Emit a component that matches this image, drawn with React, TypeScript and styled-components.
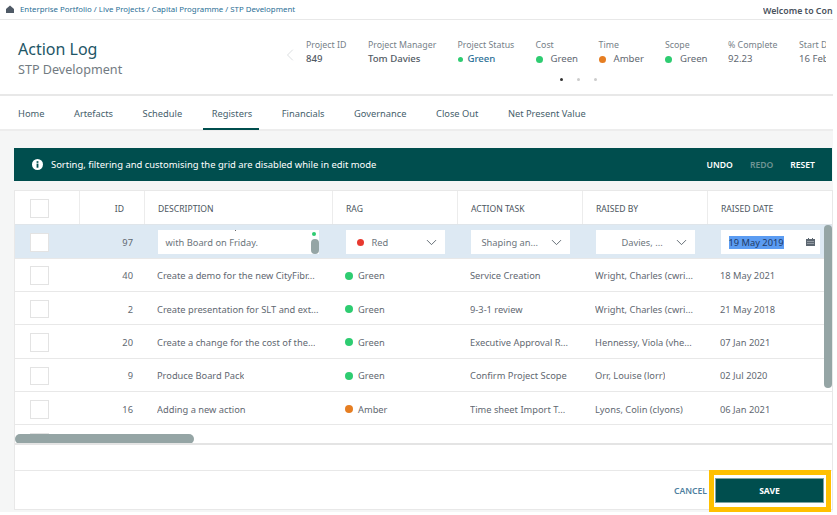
import React from "react";
import styled, { createGlobalStyle } from "styled-components";
import { ChevronDown, ChevronLeft } from "lucide-react";

const Global = createGlobalStyle`
  html, body { margin: 0; padding: 0; background: #fff; overflow: hidden; }
  body { font-family: "Noto Sans", "Open Sans", "Liberation Sans", sans-serif; }
  * { box-sizing: border-box; }
`;

const Page = styled.div`
  width: 833px;
  height: 512px;
  background: #f5f6f6;
  position: relative;
  overflow: hidden;
`;
const TopBar = styled.div`
  height: 20px;
  background: #fff;
  border-bottom: 1px solid #e8e8e8;
  display: flex;
  align-items: center;
  padding: 0 0 1px 6px;
  font-size: 7.85px;
  color: #2b6f96;
`;
const Crumbs = styled.span`
  margin-left: 6px;
  white-space: nowrap;
`;
const Welcome = styled.span`
  margin-left: auto;
  padding-top: 3px;
  width: 70px;
  overflow: hidden;
  font-size: 8.8px;
  font-weight: 600;
  color: #4a525c;
  white-space: nowrap;
`;
const Header = styled.div`
  height: 76px;
  background: #fff;
  border-bottom: 2px solid #e8e8e8;
  display: flex;
`;
const TitleBlock = styled.div`
  width: 283px;
  padding: 17px 0 0 18px;
`;
const Title = styled.div`
  font-size: 16px;
  line-height: 24px;
  color: #1e5666;
`;
const Subtitle = styled.div`
  font-size: 12.6px;
  line-height: 17px;
  color: #727b82;
`;
const MetaArea = styled.div`
  width: 543px;
  overflow: hidden;
  position: relative;
  padding-top: 18px;
`;
const MetaRow = styled.div`
  display: flex;
  align-items: flex-start;
`;
const Prev = styled.div`
  flex: 0 0 26px;
  color: #dcdfe1;
  padding-top: 7px;
  margin-left: -3px;
`;
const MetaItem = styled.div<{ $w: number }>`
  flex: 0 0 ${(p) => p.$w}px;
  white-space: nowrap;
`;
const MetaLabel = styled.div`
  font-size: 8.8px;
  line-height: 14px;
  color: #767f88;
`;
const MetaValue = styled.div<{ $strong?: boolean; $blue?: boolean }>`
  font-size: 9.6px;
  line-height: 14px;
  display: flex;
  align-items: center;
  font-weight: ${(p) => (p.$strong ? 500 : 400)};
  color: ${(p) => (p.$blue ? "#2b6f96" : p.$strong ? "#525a64" : "#5f6871")};
`;
const Dot = styled.span<{ $c: string; $s?: number; $g?: number }>`
  display: inline-block;
  flex: none;
  width: ${(p) => p.$s ?? 7}px;
  height: ${(p) => p.$s ?? 7}px;
  border-radius: 50%;
  background: ${(p) => p.$c};
  margin-right: ${(p) => p.$g ?? 5}px;
`;
const RagDot = styled(Dot)`
  margin-left: 3px;
`;
const Pager = styled.div`
  position: absolute;
  left: 277px;
  top: 58px;
  display: flex;
  gap: 14px;
`;
const PagerDot = styled.span<{ $on?: boolean }>`
  width: 3px;
  height: 3px;
  border-radius: 50%;
  background: ${(p) => (p.$on ? "#333" : "#ccc")};
`;
const Nav = styled.nav`
  height: 35px;
  background: #fff;
  border-bottom: 2px solid #ededed;
  display: flex;
  gap: 29.5px;
  padding: 0 0 0 18px;
`;
const NavItem = styled.div<{ $on?: boolean }>`
  position: relative;
  font-size: 9.3px;
  line-height: 35px;
  color: #45606b;
  white-space: nowrap;
  ${(p) =>
    p.$on &&
    `&::after { content: ""; position: absolute; left: -9px; right: -7px; top: 32px; height: 2px; background: #004e4e; }`}
`;
const Content = styled.div`
  padding: 17px 0 0 14px;
`;
const Banner = styled.div`
  width: 818px;
  height: 33px;
  background: #004e4e;
  color: #fff;
  display: flex;
  align-items: center;
  padding: 0 17px 0 18px;
  font-size: 9.44px;
`;
const BannerText = styled.span`
  margin-left: 8px;
`;
const BannerActions = styled.div`
  margin-left: auto;
  display: flex;
  gap: 17px;
  font-size: 8.6px;
  font-weight: 600;
`;
const BannerAction = styled.span<{ $off?: boolean }>`
  color: ${(p) => (p.$off ? "#6f9494" : "#fff")};
`;
const Panel = styled.div`
  margin-top: 9px;
  width: 819px;
  background: #fff;
  border: 1px solid #e8e8e8;
`;
const GridWrap = styled.div`
  position: relative;
  height: 254px;
  overflow: hidden;
  border-bottom: 2px solid #e4e4e4;
`;
const Row = styled.div<{ $kind?: "head" | "edit" }>`
  display: grid;
  grid-template-columns: 64px 65px 188px 125px 125px 125px 126px;
  height: ${(p) => (p.$kind === "head" ? "34px" : p.$kind === "edit" ? "33.5px" : "33.4px")};
  align-items: center;
  font-size: 9.3px;
  color: ${(p) => (p.$kind === "head" ? "#4c5660" : "#5f6871")};
  background: ${(p) => (p.$kind === "edit" ? "#dde9f3" : "#fff")};
  border-bottom: 1px solid ${(p) => (p.$kind === "head" ? "#dfe5ea" : "#e8e8e8")};
`;
const HeadCell = styled.div<{ $right?: boolean }>`
  height: 100%;
  display: flex;
  align-items: center;
  justify-content: ${(p) => (p.$right ? "flex-end" : "flex-start")};
  padding: ${(p) => (p.$right ? "2px 20px 0 0" : "2px 0 0 13px")};
  border-left: 1px solid #ececec;
  font-size: 8.6px;
  white-space: nowrap;
`;
const Cell = styled.div<{ $right?: boolean; $box?: boolean }>`
  display: flex;
  align-items: center;
  justify-content: ${(p) => (p.$right ? "flex-end" : "flex-start")};
  padding: ${(p) => (p.$box ? "1px 10px 0 13.5px" : p.$right ? "2px 11px 0 0" : "2px 10px 0 13px")};
  white-space: nowrap;
  overflow: hidden;
  min-width: 0;
`;
const CheckCell = styled.div`
  padding: 2px 0 0 15px;
  display: flex;
  align-items: center;
`;
const Check = styled.span`
  width: 18.5px;
  height: 18.5px;
  background: #fff;
  border: 1px solid #e3e3e3;
`;
const Clip = styled.span`
  overflow: hidden;
  text-overflow: ellipsis;
`;
const EditBox = styled.div<{ $w?: number }>`
  position: relative;
  width: ${(p) => p.$w ?? 99}px;
  height: 24px;
  background: #fff;
  display: flex;
  align-items: center;
  padding: 1px 8px 0;
  color: #6c747b;
  overflow: hidden;
`;
const Tick = styled.span`
  position: absolute;
  left: 77px;
  top: -1px;
  width: 1px;
  height: 2px;
  background: #666;
`;
const AreaDot = styled.span`
  position: absolute;
  right: 3px;
  top: 2px;
  width: 4px;
  height: 4px;
  border-radius: 50%;
  background: #2ecc71;
`;
const AreaThumb = styled.span`
  position: absolute;
  right: 0;
  top: 9px;
  width: 8px;
  height: 15px;
  border-radius: 4px;
  background: #95a5a5;
`;
const SelectText = styled.span<{ $pad?: number }>`
  padding-left: ${(p) => p.$pad ?? 0}px;
  flex: 1;
  min-width: 0;
  white-space: nowrap;
`;
const Caret = styled(ChevronDown)`
  flex: none;
  margin-right: -3px;
  color: #59636c;
`;
const Selected = styled.span`
  background: #5b9cf2;
  color: #1f3a66;
`;
const Calendar = styled.svg`
  position: absolute;
  right: 5px;
  top: 8px;
`;
const VScroll = styled.div`
  position: absolute;
  right: 0;
  top: 34px;
  width: 8px;
  height: 163px;
  border-radius: 4px;
  background: #95a5a5;
`;
const HScroll = styled.div`
  position: absolute;
  left: 0;
  top: 243px;
  width: 179px;
  height: 10px;
  border-radius: 5px;
  background: #95a5a5;
`;
const Spacer = styled.div`
  height: 26px;
  border-bottom: 1px solid #e8e8e8;
`;
const Footer = styled.div`
  position: relative;
  height: 38px;
  display: flex;
  justify-content: flex-end;
  align-items: center;
  padding: 1px 8px 0 0;
`;
const Cancel = styled.span`
  font-size: 8.6px;
  font-weight: 600;
  color: #4f7f9f;
  margin-right: 8px;
`;
const Save = styled.button`
  width: 109px;
  height: 25px;
  background: #004e4e;
  border: 1px solid #7fa3a3;
  color: #fff;
  font: 700 8.6px "Noto Sans", sans-serif;
`;
const Highlight = styled.div`
  position: absolute;
  right: 1px;
  top: -1px;
  width: 122px;
  height: 42px;
  border: 5px solid #ffc000;
  pointer-events: none;
`;

const Info = () => (
  <svg width="11" height="11" viewBox="0 0 12 12" aria-hidden="true">
    <circle cx="6" cy="6" r="6" fill="#fff" />
    <rect x="5" y="5" width="2" height="4.5" fill="#004e4e" />
    <rect x="5" y="2.4" width="2" height="1.8" fill="#004e4e" />
  </svg>
);
const Home = () => (
  <svg width="8" height="8" viewBox="0 0 8 8" aria-hidden="true">
    <path d="M4 .5 L8 4 V8 H0 V4 Z" fill="#4f5a66" />
  </svg>
);

const rows = [
  ["40", "Create a demo for the new CityFibr...", "#2ecc71", "Green", "Service Creation", "Wright, Charles (cwri...", "18 May 2021"],
  ["2", "Create presentation for SLT and ext...", "#2ecc71", "Green", "9-3-1 review", "Wright, Charles (cwri...", "21 May 2018"],
  ["20", "Create a change for the cost of the...", "#2ecc71", "Green", "Executive Approval R...", "Hennessy, Viola (vhe...", "07 Jan 2021"],
  ["9", "Produce Board Pack", "#2ecc71", "Green", "Confirm Project Scope", "Orr, Louise (lorr)", "02 Jul 2020"],
  ["16", "Adding a new action", "#e67e22", "Amber", "Time sheet Import T...", "Lyons, Colin (clyons)", "06 Jan 2021"],
];

export default function App() {
  return (
    <Page>
      <Global />
      <TopBar>
        <Home />
        <Crumbs>Enterprise Portfolio / Live Projects / Capital Programme / STP Development</Crumbs>
        <Welcome>Welcome to Con</Welcome>
      </TopBar>
      <Header>
        <TitleBlock>
          <Title>Action Log</Title>
          <Subtitle>STP Development</Subtitle>
        </TitleBlock>
        <MetaArea>
          <MetaRow>
            <Prev><ChevronLeft size={20} strokeWidth={1.2} /></Prev>
            <MetaItem $w={62}><MetaLabel>Project ID</MetaLabel><MetaValue $strong>849</MetaValue></MetaItem>
            <MetaItem $w={89.5}><MetaLabel>Project Manager</MetaLabel><MetaValue $strong>Tom Davies</MetaValue></MetaItem>
            <MetaItem $w={78}><MetaLabel>Project Status</MetaLabel><MetaValue $strong $blue><Dot $c="#2ecc71" $s={5} $g={5} />Green</MetaValue></MetaItem>
            <MetaItem $w={63}><MetaLabel>Cost</MetaLabel><MetaValue><Dot $c="#2ecc71" $g={8} />Green</MetaValue></MetaItem>
            <MetaItem $w={66.5}><MetaLabel>Time</MetaLabel><MetaValue><Dot $c="#e67e22" $g={8} />Amber</MetaValue></MetaItem>
            <MetaItem $w={63}><MetaLabel>Scope</MetaLabel><MetaValue><Dot $c="#2ecc71" $g={8} />Green</MetaValue></MetaItem>
            <MetaItem $w={71}><MetaLabel>% Complete</MetaLabel><MetaValue>92.23</MetaValue></MetaItem>
            <MetaItem $w={60}><MetaLabel>Start Date</MetaLabel><MetaValue>16 Feb 2021</MetaValue></MetaItem>
          </MetaRow>
          <Pager><PagerDot $on /><PagerDot /><PagerDot /></Pager>
        </MetaArea>
      </Header>
      <Nav>
        <NavItem>Home</NavItem>
        <NavItem>Artefacts</NavItem>
        <NavItem>Schedule</NavItem>
        <NavItem $on>Registers</NavItem>
        <NavItem>Financials</NavItem>
        <NavItem>Governance</NavItem>
        <NavItem>Close Out</NavItem>
        <NavItem>Net Present Value</NavItem>
      </Nav>
      <Content>
        <Banner>
          <Info />
          <BannerText>Sorting, filtering and customising the grid are disabled while in edit mode</BannerText>
          <BannerActions>
            <BannerAction>UNDO</BannerAction>
            <BannerAction $off>REDO</BannerAction>
            <BannerAction>RESET</BannerAction>
          </BannerActions>
        </Banner>
        <Panel>
          <GridWrap>
            <Row $kind="head">
              <CheckCell><Check /></CheckCell>
              <HeadCell $right>ID</HeadCell>
              <HeadCell>DESCRIPTION</HeadCell>
              <HeadCell>RAG</HeadCell>
              <HeadCell>ACTION TASK</HeadCell>
              <HeadCell>RAISED BY</HeadCell>
              <HeadCell>RAISED DATE</HeadCell>
            </Row>
            <Row $kind="edit">
              <CheckCell><Check /></CheckCell>
              <Cell $right>97</Cell>
              <Cell $box>
                <EditBox $w={161}>
                  <Tick />
                  with Board on Friday.
                  <AreaDot />
                  <AreaThumb />
                </EditBox>
              </Cell>
              <Cell $box>
                <EditBox>
                  <RagDot $c="#e8392f" $s={7} $g={8} />
                  <SelectText>Red</SelectText>
                  <Caret size={17} strokeWidth={1.3} />
                </EditBox>
              </Cell>
              <Cell $box>
                <EditBox>
                  <SelectText $pad={3}>Shaping an...</SelectText>
                  <Caret size={17} strokeWidth={1.3} />
                </EditBox>
              </Cell>
              <Cell $box>
                <EditBox>
                  <SelectText $pad={18}>Davies, ...</SelectText>
                  <Caret size={17} strokeWidth={1.3} />
                </EditBox>
              </Cell>
              <Cell $box>
                <EditBox>
                  <Selected>19 May 2019</Selected>
                  <Calendar width="9" height="8" viewBox="0 0 9 8" aria-hidden="true">
                    <path d="M0 1h2V0h1v1h3V0h1v1h2v7H0z" fill="#5c6670" />
                    <path d="M1 3.2h7v.6H1zM1 5.2h7v.6H1z" fill="#c8ced3" />
                  </Calendar>
                </EditBox>
              </Cell>
            </Row>
            {rows.map((r) => (
              <Row key={r[0]}>
                <CheckCell><Check /></CheckCell>
                <Cell $right>{r[0]}</Cell>
                <Cell><Clip>{r[1]}</Clip></Cell>
                <Cell><Dot $c={r[2]} $s={8} $g={5} />{r[3]}</Cell>
                <Cell><Clip>{r[4]}</Clip></Cell>
                <Cell><Clip>{r[5]}</Clip></Cell>
                <Cell>{r[6]}</Cell>
              </Row>
            ))}
            <Row>
              <CheckCell><Check /></CheckCell>
            </Row>
            <VScroll />
            <HScroll />
          </GridWrap>
          <Spacer />
          <Footer>
            <Cancel>CANCEL</Cancel>
            <Save>SAVE</Save>
            <Highlight />
          </Footer>
        </Panel>
      </Content>
    </Page>
  );
}
